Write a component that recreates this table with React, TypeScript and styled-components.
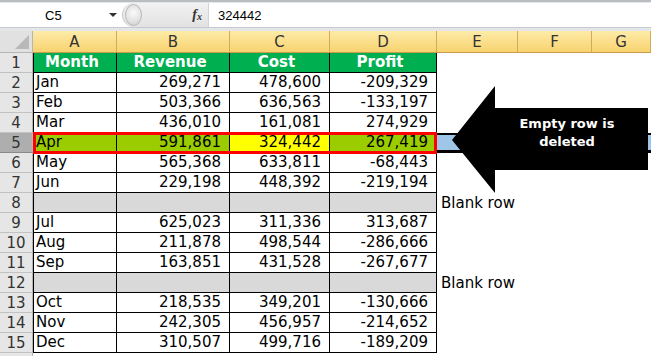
import styled, { createGlobalStyle } from "styled-components";

const GlobalStyle = createGlobalStyle`
  html, body {
    margin: 0;
    padding: 0;
    background: #fff;
    overflow: hidden;
  }
  body {
    font-family: "DejaVu Sans", Verdana, sans-serif;
  }
`;

type Row = {
  month: string;
  revenue: string;
  cost: string;
  profit: string;
  blank?: boolean;
  selected?: boolean;
};

const rows: Row[] = [
  { month: "Jan", revenue: "269,271", cost: "478,600", profit: "-209,329" },
  { month: "Feb", revenue: "503,366", cost: "636,563", profit: "-133,197" },
  { month: "Mar", revenue: "436,010", cost: "161,081", profit: "274,929" },
  { month: "Apr", revenue: "591,861", cost: "324,442", profit: "267,419", selected: true },
  { month: "May", revenue: "565,368", cost: "633,811", profit: "-68,443" },
  { month: "Jun", revenue: "229,198", cost: "448,392", profit: "-219,194" },
  { month: "", revenue: "", cost: "", profit: "", blank: true },
  { month: "Jul", revenue: "625,023", cost: "311,336", profit: "313,687" },
  { month: "Aug", revenue: "211,878", cost: "498,544", profit: "-286,666" },
  { month: "Sep", revenue: "163,851", cost: "431,528", profit: "-267,677" },
  { month: "", revenue: "", cost: "", profit: "", blank: true },
  { month: "Oct", revenue: "218,535", cost: "349,201", profit: "-130,666" },
  { month: "Nov", revenue: "242,305", cost: "456,957", profit: "-214,652" },
  { month: "Dec", revenue: "310,507", cost: "499,716", profit: "-189,209" },
];

const COLORS = {
  green: "#00b050",
  olive: "#9acc00",
  yellow: "#ffff00",
  blank: "#d9d9d9",
};

const App = () => {
  return (
    <>
      <GlobalStyle />
      <TopStrip>
        <FormulaBar>
          <NameBox>
            <span>C5</span>
            <DropArrow />
          </NameBox>
          <GripPanel>
            <Grip />
            <Fx>
              f<sub>x</sub>
            </Fx>
          </GripPanel>
          <FormulaInput>324442</FormulaInput>
        </FormulaBar>
      </TopStrip>

      <SheetArea>
        <Sheet>
          <Corner />
          {["A", "B", "C", "D", "E", "F", "G"].map((c) => (
            <ColHead key={c}>{c}</ColHead>
          ))}

          <RowHead>1</RowHead>
          <Cell $bg={COLORS.green} $bold $align="center" $first>
            Month
          </Cell>
          <Cell $bg={COLORS.green} $bold $align="center">
            Revenue
          </Cell>
          <Cell $bg={COLORS.green} $bold $align="center">
            Cost
          </Cell>
          <Cell $bg={COLORS.green} $bold $align="center">
            Profit
          </Cell>
          <Outside />
          <Outside />
          <Outside />

          {rows.map((r, i) => {
            const n = i + 2;
            const bg = r.blank ? COLORS.blank : r.selected ? COLORS.olive : "#fff";
            return (
              <RowFrag key={n}>
                <RowHead $active={r.selected}>{n}</RowHead>
                <Cell $bg={bg} $first>
                  {r.month}
                </Cell>
                <Cell $bg={bg} $align="right">
                  {r.revenue}
                </Cell>
                <Cell $bg={r.selected ? COLORS.yellow : bg} $align="right">
                  {r.cost}
                </Cell>
                <Cell $bg={bg} $align="right">
                  {r.profit}
                </Cell>
                <Outside $band={r.selected}>{r.blank ? "Blank row" : ""}</Outside>
                <Outside $band={r.selected} />
                <Outside $band={r.selected} />
              </RowFrag>
            );
          })}

          {/* row 16 is only a sliver at the bottom edge */}
          <RowHead />
        </Sheet>

        <SelectionBox />

        <Callout>
          <svg width="196" height="107" viewBox="0 0 196 107">
            <polygon
              points="0,54 43,0 43,22 196,22 196,84 43,84 43,107"
              fill="#000"
            />
          </svg>
          <CalloutText>
            Empty row is
            <br />
            deleted
          </CalloutText>
        </Callout>
      </SheetArea>
    </>
  );
};

export default App;

const RowFrag = ({ children }: { children: React.ReactNode }) => <>{children}</>;

const TopStrip = styled.div`
  height: 31px;
  box-sizing: border-box;
  background: #e4e6e9;
  border-top: 2px solid #b9bcc1;
  padding-top: 1px;
`;

const FormulaBar = styled.div`
  display: flex;
  height: 25px;
  background: #fff;
  border-bottom: 1px solid #c6c9cd;
  box-sizing: border-box;
  font-family: "Liberation Sans", Arial, sans-serif;
  font-size: 13px;
  color: #000;
`;

const NameBox = styled.div`
  width: 122px;
  display: flex;
  align-items: center;
  padding-left: 45px;
  box-sizing: border-box;
`;

const DropArrow = styled.div`
  margin-left: auto;
  margin-right: 5px;
  width: 0;
  height: 0;
  border-left: 4px solid transparent;
  border-right: 4px solid transparent;
  border-top: 4px solid #333;
`;

const GripPanel = styled.div`
  width: 86px;
  display: flex;
  align-items: center;
  background: linear-gradient(#f2f2f2, #e2e2e2);
  border-left: 1px solid #c9c9c9;
  border-radius: 12px 0 0 12px;
  padding-left: 2px;
  padding-right: 6px;
  box-sizing: border-box;
`;

const Grip = styled.div`
  width: 15px;
  height: 20px;
  border-radius: 50%;
  background: radial-gradient(circle at 50% 40%, #fafafa, #d0d0d0);
  border: 1px solid #bcbcbc;
`;

const Fx = styled.div`
  margin-left: auto;
  font-family: "Liberation Serif", "Times New Roman", serif;
  font-style: italic;
  font-weight: bold;
  font-size: 14px;
  color: #333;
  sub {
    font-size: 10px;
    vertical-align: -1px;
  }
`;

const FormulaInput = styled.div`
  flex: 1;
  display: flex;
  align-items: center;
  padding-left: 9px;
  border-left: 1px solid #d4d4d4;
`;

const SheetArea = styled.div`
  position: relative;
`;

const Sheet = styled.div`
  display: grid;
  grid-template-columns: 33px 84px 113px 100px 107px 81px 74px 1fr;
  grid-template-rows: 22px repeat(16, 20px);
  font-size: 15px;
  color: #000;
`;

const Corner = styled.div`
  background: #e1e1e1;
  border-right: 1px solid #b5b5b5;
  border-bottom: 1px solid #b5b5b5;
  box-sizing: border-box;
  position: relative;
  &::after {
    content: "";
    position: absolute;
    right: 3px;
    bottom: 3px;
    border-left: 14px solid transparent;
    border-bottom: 14px solid #b8b8b8;
  }
`;

const ColHead = styled.div`
  background: linear-gradient(#fdeba8, #f8d36f);
  border-right: 1px solid #d3a95c;
  border-bottom: 1px solid #c89b4e;
  box-sizing: border-box;
  display: flex;
  align-items: center;
  justify-content: center;
  color: #333;
  font-size: 15px;
`;

const RowHead = styled.div<{ $active?: boolean }>`
  background: ${(p) => (p.$active ? "#aeaeae" : "#e6e6e6")};
  border-bottom: 1px solid ${(p) => (p.$active ? "#8a8a8a" : "#c2c2c2")};
  border-right: 1px solid #b5b5b5;
  box-sizing: border-box;
  display: flex;
  align-items: center;
  justify-content: center;
  color: #333;
`;

const Cell = styled.div<{
  $bg: string;
  $align?: "left" | "right" | "center";
  $bold?: boolean;
  $first?: boolean;
}>`
  background: ${(p) => p.$bg};
  border-right: 1px solid #000;
  border-bottom: 1px solid #000;
  border-left: ${(p) => (p.$first ? "1px solid #000" : "none")};
  box-sizing: border-box;
  display: flex;
  align-items: center;
  justify-content: ${(p) =>
    p.$align === "right" ? "flex-end" : p.$align === "center" ? "center" : "flex-start"};
  padding: 0 8px 0 2px;
  font-weight: ${(p) => (p.$bold ? "bold" : "normal")};
  color: ${(p) => (p.$bold ? "#fff" : "#000")};
  white-space: nowrap;
  line-height: 19px;
`;

const Outside = styled.div<{ $band?: boolean }>`
  background: ${(p) => (p.$band ? "#9fc5e8" : "#fff")};
  border-top: ${(p) => (p.$band ? "2px solid #000" : "none")};
  border-bottom: ${(p) => (p.$band ? "3px solid #000" : "none")};
  box-sizing: border-box;
  display: flex;
  align-items: center;
  padding-left: 4px;
  white-space: nowrap;
  line-height: 19px;
`;

const SelectionBox = styled.div`
  position: absolute;
  left: 33px;
  top: 101px;
  width: 404px;
  height: 22px;
  border: 3px solid #ff0000;
  box-sizing: border-box;
  pointer-events: none;
`;

const Callout = styled.div`
  position: absolute;
  left: 452px;
  top: 55px;
  width: 196px;
  height: 107px;
  svg {
    display: block;
  }
`;

const CalloutText = styled.div`
  position: absolute;
  left: 43px;
  top: 22px;
  width: 153px;
  height: 62px;
  box-sizing: border-box;
  padding: 0 9px 12px 0;
  display: flex;
  flex-direction: column;
  align-items: center;
  justify-content: center;
  text-align: center;
  color: #fff;
  font-weight: bold;
  font-size: 13px;
  line-height: 18px;
`;
